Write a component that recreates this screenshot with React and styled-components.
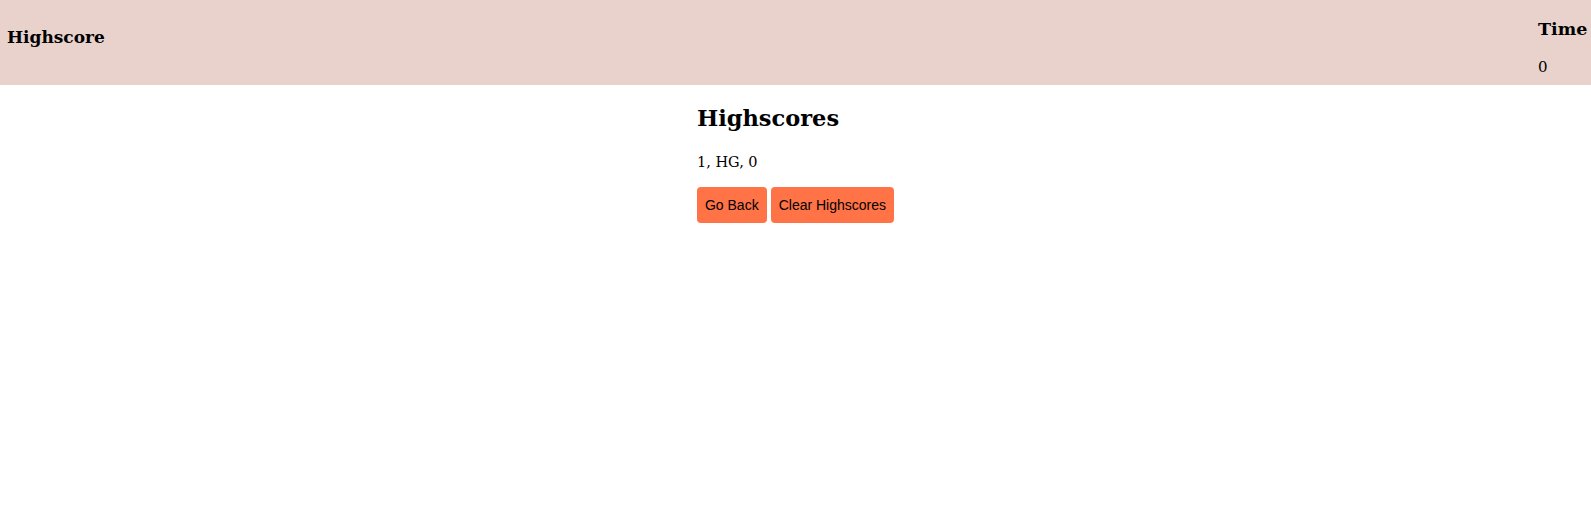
import React from 'react';
import styled, { createGlobalStyle } from 'styled-components';

const GlobalStyle = createGlobalStyle`
  body {
    margin: 0;
    font-family: "DejaVu Serif", "Liberation Serif", serif;
    color: #000;
    background: #fff;
  }
`;

const Header = styled.header`
  display: flex;
  justify-content: space-between;
  align-items: flex-start;
  height: 85px;
  background: #e8d2cb;
`;

const Brand = styled.h3`
  margin: 27px 0 0 7px;
  font-size: 17px;
  font-weight: 700;
`;

const TimeBox = styled.div`
  width: 45px;
  margin: 19px 8px 0 0;
  white-space: nowrap;
`;

const TimeLabel = styled.h3`
  margin: 0;
  font-size: 17.5px;
  font-weight: 700;
`;

const TimeValue = styled.p`
  margin: 19px 0 0;
  font-size: 15px;
`;

const Main = styled.main`
  display: flex;
  justify-content: center;
`;

const Panel = styled.section`
  display: flex;
  flex-direction: column;
  align-items: flex-start;
`;

const Title = styled.h2`
  margin: 20px 0 0;
  font-size: 22.5px;
  font-weight: 700;
`;

const ScoreLine = styled.p`
  margin: 23px 0 0;
  font-size: 14.5px;
`;

const Actions = styled.div`
  display: flex;
  gap: 4px;
  margin-top: 17px;
`;

const Button = styled.button`
  padding: 10px 8px;
  border: 0;
  border-radius: 4px;
  background: #ff7347;
  color: #000;
  font-family: "Liberation Sans", Arial, sans-serif;
  font-size: 14px;
  cursor: pointer;
`;

const scores = [{ rank: 1, initials: 'HG', score: 0 }];

export default function App() {
  return (
    <>
      <GlobalStyle />
      <Header>
        <Brand>Highscore</Brand>
        <TimeBox>
          <TimeLabel>Time</TimeLabel>
          <TimeValue>0</TimeValue>
        </TimeBox>
      </Header>
      <Main>
        <Panel>
          <Title>Highscores</Title>
          {scores.map(s => (
            <ScoreLine key={s.rank}>
              {s.rank}, {s.initials}, {s.score}
            </ScoreLine>
          ))}
          <Actions>
            <Button type="button">Go Back</Button>
            <Button type="button">Clear Highscores</Button>
          </Actions>
        </Panel>
      </Main>
    </>
  );
}
